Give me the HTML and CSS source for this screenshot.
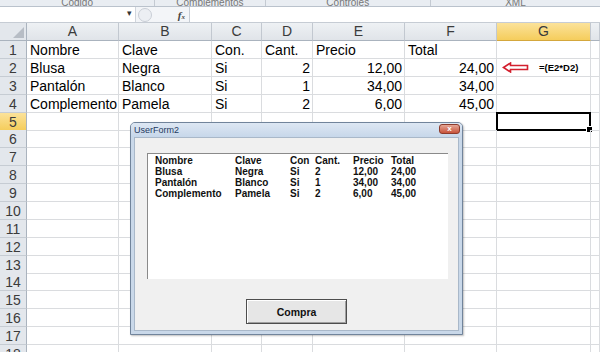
FILE: index.html
```html
<!DOCTYPE html>
<html lang="es">
<head>
    <meta charset="UTF-8">
    <meta name="viewport" content="width=device-width, initial-scale=1.0">
    <title>Libro1 - Excel</title>
    <link rel="stylesheet" href="styles.css">
</head>
<body>
    <div class="ribbon">
        <div class="group g-code">Código</div>
        <div class="group g-addins">Complementos</div>
        <div class="group g-controls">Controles</div>
        <div class="group g-xml">XML</div>
    </div>

    <div class="formula-bar">
        <div class="name-box"><span class="drop">&#9662;</span></div>
        <div class="fx-area">
            <span class="knob"></span>
            <span class="fx">f<small>x</small></span>
        </div>
        <div class="formula-input"></div>
    </div>

    <div class="sheet">
        <div class="row head-row">
            <div class="corner"></div>
            <div class="col-head">A</div>
            <div class="col-head">B</div>
            <div class="col-head">C</div>
            <div class="col-head">D</div>
            <div class="col-head">E</div>
            <div class="col-head">F</div>
            <div class="col-head selected">G</div>
            <div class="col-head"></div>
        </div>
        <div class="row">
            <div class="row-head">1</div>
            <div class="cell">Nombre</div>
            <div class="cell">Clave</div>
            <div class="cell">Con.</div>
            <div class="cell">Cant.</div>
            <div class="cell">Precio</div>
            <div class="cell">Total</div>
            <div class="cell"></div>
            <div class="cell"></div>
        </div>
        <div class="row">
            <div class="row-head">2</div>
            <div class="cell">Blusa</div>
            <div class="cell">Negra</div>
            <div class="cell">Si</div>
            <div class="cell num">2</div>
            <div class="cell num">12,00</div>
            <div class="cell num">24,00</div>
            <div class="cell note">
                <svg class="arrow" width="27" height="11" viewBox="0 0 27 11">
                    <polygon points="1.5,5.5 8.5,1 8.5,3.5 25.5,3.5 25.5,7.5 8.5,7.5 8.5,10" fill="#fff" stroke="#d3202e" stroke-width="1.6" stroke-linejoin="miter"/>
                </svg>
                <span class="formula">=(E2*D2)</span>
            </div>
            <div class="cell"></div>
        </div>
        <div class="row">
            <div class="row-head">3</div>
            <div class="cell">Pantalón</div>
            <div class="cell">Blanco</div>
            <div class="cell">Si</div>
            <div class="cell num">1</div>
            <div class="cell num">34,00</div>
            <div class="cell num">34,00</div>
            <div class="cell"></div>
            <div class="cell"></div>
        </div>
        <div class="row">
            <div class="row-head">4</div>
            <div class="cell">Complemento</div>
            <div class="cell">Pamela</div>
            <div class="cell">Si</div>
            <div class="cell num">2</div>
            <div class="cell num">6,00</div>
            <div class="cell num">45,00</div>
            <div class="cell"></div>
            <div class="cell"></div>
        </div>
        <div class="row">
            <div class="row-head selected">5</div>
            <div class="cell"></div><div class="cell"></div><div class="cell"></div><div class="cell"></div>
            <div class="cell"></div><div class="cell"></div><div class="cell active"></div><div class="cell"></div>
        </div>
        <div class="row">
            <div class="row-head">6</div>
            <div class="cell"></div><div class="cell"></div><div class="cell"></div><div class="cell"></div>
            <div class="cell"></div><div class="cell"></div><div class="cell"></div><div class="cell"></div>
        </div>
        <div class="row">
            <div class="row-head">7</div>
            <div class="cell"></div><div class="cell"></div><div class="cell"></div><div class="cell"></div>
            <div class="cell"></div><div class="cell"></div><div class="cell"></div><div class="cell"></div>
        </div>
        <div class="row">
            <div class="row-head">8</div>
            <div class="cell"></div><div class="cell"></div><div class="cell"></div><div class="cell"></div>
            <div class="cell"></div><div class="cell"></div><div class="cell"></div><div class="cell"></div>
        </div>
        <div class="row">
            <div class="row-head">9</div>
            <div class="cell"></div><div class="cell"></div><div class="cell"></div><div class="cell"></div>
            <div class="cell"></div><div class="cell"></div><div class="cell"></div><div class="cell"></div>
        </div>
        <div class="row">
            <div class="row-head">10</div>
            <div class="cell"></div><div class="cell"></div><div class="cell"></div><div class="cell"></div>
            <div class="cell"></div><div class="cell"></div><div class="cell"></div><div class="cell"></div>
        </div>
        <div class="row">
            <div class="row-head">11</div>
            <div class="cell"></div><div class="cell"></div><div class="cell"></div><div class="cell"></div>
            <div class="cell"></div><div class="cell"></div><div class="cell"></div><div class="cell"></div>
        </div>
        <div class="row">
            <div class="row-head">12</div>
            <div class="cell"></div><div class="cell"></div><div class="cell"></div><div class="cell"></div>
            <div class="cell"></div><div class="cell"></div><div class="cell"></div><div class="cell"></div>
        </div>
        <div class="row">
            <div class="row-head">13</div>
            <div class="cell"></div><div class="cell"></div><div class="cell"></div><div class="cell"></div>
            <div class="cell"></div><div class="cell"></div><div class="cell"></div><div class="cell"></div>
        </div>
        <div class="row">
            <div class="row-head">14</div>
            <div class="cell"></div><div class="cell"></div><div class="cell"></div><div class="cell"></div>
            <div class="cell"></div><div class="cell"></div><div class="cell"></div><div class="cell"></div>
        </div>
        <div class="row">
            <div class="row-head">15</div>
            <div class="cell"></div><div class="cell"></div><div class="cell"></div><div class="cell"></div>
            <div class="cell"></div><div class="cell"></div><div class="cell"></div><div class="cell"></div>
        </div>
        <div class="row">
            <div class="row-head">16</div>
            <div class="cell"></div><div class="cell"></div><div class="cell"></div><div class="cell"></div>
            <div class="cell"></div><div class="cell"></div><div class="cell"></div><div class="cell"></div>
        </div>
        <div class="row">
            <div class="row-head">17</div>
            <div class="cell"></div><div class="cell"></div><div class="cell"></div><div class="cell"></div>
            <div class="cell"></div><div class="cell"></div><div class="cell"></div><div class="cell"></div>
        </div>
        <div class="row">
            <div class="row-head">18</div>
            <div class="cell"></div><div class="cell"></div><div class="cell"></div><div class="cell"></div>
            <div class="cell"></div><div class="cell"></div><div class="cell"></div><div class="cell"></div>
        </div>
    </div>

    <!-- VBA UserForm floating over the sheet -->
    <div class="userform">
        <div class="uf-title">
            <span>UserForm2</span>
            <div class="uf-close">x</div>
        </div>
        <div class="uf-body">
            <div class="listbox">
                <div class="lb-row">
                    <span>Nombre</span><span>Clave</span><span>Con</span><span>Cant.</span><span>Precio</span><span>Total</span>
                </div>
                <div class="lb-row">
                    <span>Blusa</span><span>Negra</span><span>Si</span><span>2</span><span>12,00</span><span>24,00</span>
                </div>
                <div class="lb-row">
                    <span>Pantalón</span><span>Blanco</span><span>Si</span><span>1</span><span>34,00</span><span>34,00</span>
                </div>
                <div class="lb-row">
                    <span>Complemento</span><span>Pamela</span><span>Si</span><span>2</span><span>6,00</span><span>45,00</span>
                </div>
            </div>
            <button class="uf-button">Compra</button>
        </div>
    </div>
</body>
</html>
```

FILE: styles.css
```css
body {
    margin: 0;
    padding: 0;
    width: 600px;
    height: 352px;
    overflow: hidden;
    background: #fff;
    font-family: "Liberation Sans", Arial, sans-serif;
    position: relative;
}

/* ribbon group labels, cut off at the top */
.ribbon {
    height: 7px;
    display: flex;
    align-items: flex-end;
    overflow: hidden;
    background: #e9edf2;
    border-bottom: 1px solid #bac2cc;
    box-sizing: border-box;
}
.group {
    font-size: 10px;
    line-height: 10px;
    margin-bottom: -2px;
    color: #777;
    text-align: center;
    border-right: 1px solid #c4cad2;
}
.g-code { width: 155px; }
.g-addins { width: 110px; }
.g-controls { width: 165px; }
.g-xml { width: 170px; border-right: none; }

/* formula bar */
.formula-bar {
    height: 16px;
    display: flex;
    background: #fff;
    border-bottom: 1px solid #c6ccd4;
    box-sizing: border-box;
}
.name-box {
    width: 135px;
    border-right: 1px solid #d0d5dc;
    position: relative;
}
.drop {
    position: absolute;
    right: 3px;
    top: 1px;
    font-size: 9px;
    color: #333;
}
.fx-area {
    width: 53px;
    display: flex;
    align-items: center;
    justify-content: space-between;
    padding: 0 4px 0 2px;
    box-sizing: border-box;
    background: #f3f5f8;
}
.knob {
    width: 12px;
    height: 12px;
    border: 1px solid #c9ced6;
    border-radius: 50%;
    background: #eceff3;
}
.fx {
    font-family: "Liberation Serif", serif;
    font-style: italic;
    font-weight: bold;
    font-size: 11px;
    color: #444;
}
.fx small {
    font-size: 7px;
}
.formula-input {
    flex: 1;
    border-left: 1px solid #c6ccd4;
}

/* the worksheet */
.row {
    display: grid;
    grid-template-columns: 27px 92px 93px 50px 51px 92px 92px 94px 1fr;
    height: 17.875px;
}
.head-row {
    height: 18px;
}
.corner {
    background: #e3e7ec;
    border-right: 1px solid #aab3be;
    border-bottom: 1px solid #aab3be;
    position: relative;
}
.corner::after {
    content: "";
    position: absolute;
    right: 2px;
    bottom: 2px;
    border-left: 11px solid transparent;
    border-bottom: 11px solid #b7bdc5;
}
.col-head {
    background: linear-gradient(#eef1f4, #e0e4e9);
    border-right: 1px solid #c2c8d0;
    border-bottom: 1px solid #aab3be;
    font-size: 14px;
    line-height: 17px;
    text-align: center;
    color: #3b3b3b;
}
.row-head {
    background: #e3e7ec;
    border-right: 1px solid #aab3be;
    border-bottom: 1px solid #c6ccd3;
    font-size: 14px;
    line-height: 15px;
    padding-top: 2px;
    box-sizing: border-box;
    text-align: center;
    color: #3b3b3b;
}
.col-head.selected,
.row-head.selected {
    background: linear-gradient(#fbe29a, #f5cd5c);
    border-bottom-color: #d4a73c;
}
.cell {
    border-right: 1px solid #dadcdf;
    border-bottom: 1px solid #dadcdf;
    font-size: 14px;
    line-height: 15px;
    padding: 2px 3px 0;
    box-sizing: border-box;
    white-space: nowrap;
    overflow: visible;
    color: #000;
    position: relative;
}
.cell.num {
    text-align: right;
    padding-right: 2px;
}
.cell.active {
    border: 2px solid #000;
    margin: -1px 0 0 -1px;
}
.cell.active::after {
    content: "";
    position: absolute;
    right: -4px;
    bottom: -4px;
    width: 5px;
    height: 5px;
    background: #000;
    border: 1px solid #fff;
}
.note {
    display: flex;
    align-items: center;
    padding: 0 0 0 5px;
}
.arrow {
    margin-top: 1px;
}
.formula {
    font-size: 9.5px;
    font-weight: bold;
    margin-left: 10px;
}

/* UserForm window */
.userform {
    position: absolute;
    left: 130px;
    top: 122px;
    width: 333px;
    height: 213px;
    box-sizing: border-box;
    border: 1px solid #71849b;
    border-radius: 5px 5px 0 0;
    background: #c9d8e9;
    display: flex;
    flex-direction: column;
    box-shadow: 1px 1px 2px rgba(0, 0, 0, 0.25);
}
.uf-title {
    height: 14px;
    display: flex;
    align-items: center;
    padding-left: 3px;
    font-size: 9px;
    color: #1f3a5f;
    background: linear-gradient(#dde7f3, #c7d7ea);
    border-radius: 4px 4px 0 0;
}
.uf-close {
    position: absolute;
    right: 2px;
    top: 1px;
    width: 21px;
    height: 10px;
    box-sizing: border-box;
    border: 1px solid #8d3b2c;
    border-radius: 3px;
    background: linear-gradient(#e5a695, #c8533b);
    color: #fff;
    font-size: 8px;
    font-weight: bold;
    line-height: 8px;
    text-align: center;
}
.uf-body {
    flex: 1;
    margin: 0 3px 3px;
    background: #f0f0f0;
    border: 1px solid #a9b8c9;
    display: flex;
    flex-direction: column;
    align-items: center;
}
.listbox {
    align-self: flex-start;
    margin: 15px 0 0 12px;
    width: 301px;
    height: 126px;
    box-sizing: border-box;
    background: #fff;
    border-top: 1px solid #8a8a8a;
    border-left: 1px solid #8a8a8a;
    padding: 1px 0 0 7px;
}
.lb-row {
    display: grid;
    grid-template-columns: 80px 55px 25px 38px 38px auto;
    font-size: 10px;
    font-weight: bold;
    line-height: 11px;
    color: #111;
}
.uf-button {
    margin-top: 20px;
    width: 101px;
    height: 25px;
    font-family: "Liberation Sans", Arial, sans-serif;
    font-size: 10.5px;
    font-weight: bold;
    color: #111;
    background: #e6e6e6;
    border: 1px solid #4d4d4d;
    box-shadow: inset 1px 1px 0 #fff, inset -1px -1px 0 #a0a0a0;
    padding: 0;
}
```
